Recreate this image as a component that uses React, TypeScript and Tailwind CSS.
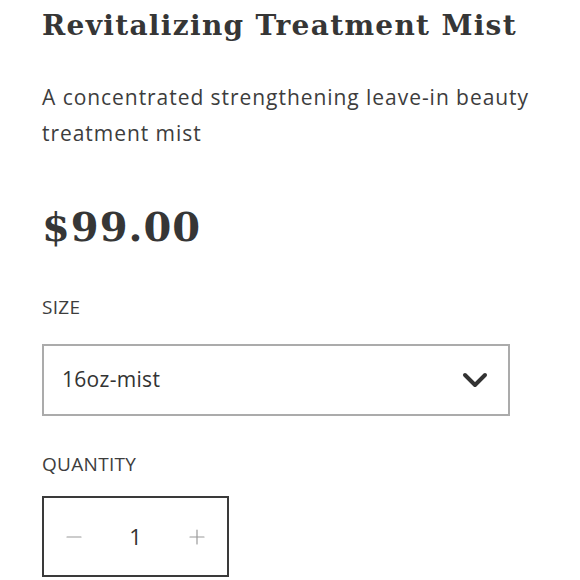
import { ChevronDown, Minus, Plus } from 'lucide-react'

export default function App() {
  return (
    <div className="min-h-[580px] bg-white px-[42px] pt-[8px] text-[#363636]">
      <h1
        className="text-[28px] font-bold leading-[36px] tracking-[1.3px]"
        style={{ fontFamily: '"DejaVu Serif", serif' }}
      >
        Revitalizing Treatment Mist
      </h1>

      <div style={{ fontFamily: '"Open Sans", sans-serif' }}>
        <p className="mt-[35px] w-[520px] text-[21px] leading-[36px] tracking-[0.95px] text-[#3d3d3d]">
          A concentrated strengthening leave-in beauty treatment mist
        </p>
      </div>

      <div
        className="mt-[50px] text-[40px] font-bold leading-[52px] tracking-[1px]"
        style={{ fontFamily: '"DejaVu Serif", serif' }}
      >
        $99.00
      </div>

      <div style={{ fontFamily: '"Open Sans", sans-serif' }}>
        <div className="mt-[42px] text-[19px] leading-[24px] tracking-[0.3px] text-[#3d3d3d]">SIZE</div>
        <div className="mt-[25px] flex h-[72px] w-[468px] items-center justify-between border-2 border-[#ababab] pl-[18px] pr-[13px]">
          <span className="text-[21px] tracking-[0.3px] text-[#333]">16oz-mist</span>
          <ChevronDown className="h-[40px] w-[40px] text-[#333]" strokeWidth={2.4} />
        </div>

        <div className="mt-[36px] text-[19px] leading-[24px] tracking-[0.3px] text-[#3d3d3d]">QUANTITY</div>
        <div className="mt-[20px] flex h-[81px] w-[187px] items-center justify-between border-2 border-[#3a3a3a] px-[18px]">
          <Minus className="h-[24px] w-[24px] text-[#9a9a9a]" strokeWidth={1.2} />
          <span className="text-[22px] text-[#333]">1</span>
          <Plus className="h-[24px] w-[24px] text-[#9a9a9a]" strokeWidth={1.2} />
        </div>
      </div>
    </div>
  )
}
